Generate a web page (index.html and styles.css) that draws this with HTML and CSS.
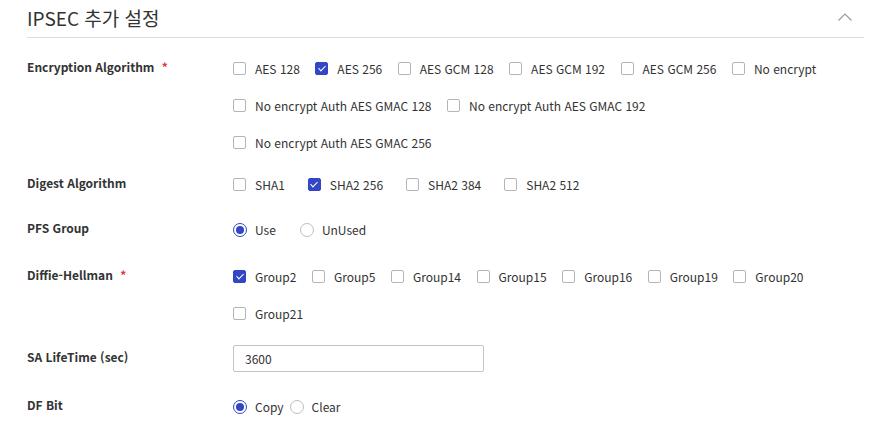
FILE: index.html
```html
<!DOCTYPE html>
<html lang="ko">
<head>
<meta charset="utf-8">
<link rel="stylesheet" href="styles.css">
</head>
<body>
<section class="panel">
  <header class="panel-head">
    <h2 class="panel-title">IPSEC 추가 설정</h2>
    <svg class="chevron" width="16" height="10" viewBox="0 0 16 10"><path d="M1.5 8.5 L8 2 L14.5 8.5" fill="none" stroke="#9a9a9a" stroke-width="1.2"/></svg>
  </header>
  <div class="form">
    <div class="field">
      <div class="label">Encryption Algorithm <span class="req">*</span></div>
      <div class="options">
        <label class="opt"><span class="cb"></span>AES 128</label>
        <label class="opt"><span class="cb on"></span>AES 256</label>
        <label class="opt"><span class="cb"></span>AES GCM 128</label>
        <label class="opt"><span class="cb"></span>AES GCM 192</label>
        <label class="opt"><span class="cb"></span>AES GCM 256</label>
        <label class="opt"><span class="cb"></span>No encrypt</label>
        <label class="opt"><span class="cb"></span>No encrypt Auth AES GMAC 128</label>
        <label class="opt"><span class="cb"></span>No encrypt Auth AES GMAC 192</label>
        <label class="opt"><span class="cb"></span>No encrypt Auth AES GMAC 256</label>
      </div>
    </div>
    <div class="field field-digest">
      <div class="label">Digest Algorithm</div>
      <div class="options spaced">
        <label class="opt"><span class="cb"></span>SHA1</label>
        <label class="opt"><span class="cb on"></span>SHA2 256</label>
        <label class="opt"><span class="cb"></span>SHA2 384</label>
        <label class="opt"><span class="cb"></span>SHA2 512</label>
      </div>
    </div>
    <div class="field field-pfs">
      <div class="label">PFS Group</div>
      <div class="options radios wide">
        <label class="opt"><span class="rd on"></span>Use</label>
        <label class="opt"><span class="rd"></span>UnUsed</label>
      </div>
    </div>
    <div class="field">
      <div class="label">Diffie-Hellman <span class="req">*</span></div>
      <div class="options">
        <label class="opt"><span class="cb on"></span>Group2</label>
        <label class="opt"><span class="cb"></span>Group5</label>
        <label class="opt"><span class="cb"></span>Group14</label>
        <label class="opt"><span class="cb"></span>Group15</label>
        <label class="opt"><span class="cb"></span>Group16</label>
        <label class="opt"><span class="cb"></span>Group19</label>
        <label class="opt"><span class="cb"></span>Group20</label>
        <label class="opt"><span class="cb"></span>Group21</label>
      </div>
    </div>
    <div class="field">
      <div class="label">SA LifeTime (sec)</div>
      <div class="options">
        <input class="text-input" type="text" value="3600">
      </div>
    </div>
    <div class="field field-last">
      <div class="label">DF Bit</div>
      <div class="options radios tight">
        <label class="opt"><span class="rd on"></span>Copy</label>
        <label class="opt"><span class="rd"></span>Clear</label>
      </div>
    </div>
  </div>
</section>
</body>
</html>
```
FILE: styles.css
```css
* { box-sizing: border-box; }
html, body { margin: 0; padding: 0; background: #fff; }
body {
  font-family: "Noto Sans CJK KR", "Noto Sans", sans-serif;
  color: #333;
  font-size: 12px;
}
.panel { padding: 0 13px 0 27px; }
.panel-head {
  display: flex;
  align-items: center;
  justify-content: space-between;
  height: 38px;
  border-bottom: 1px solid #dcdcdc;
  padding-bottom: 2px;
}
.panel-title {
  margin: 0;
  font-size: 19px;
  font-weight: 400;
  color: #333;
}
.chevron { margin-right: 11px; margin-top: -2px; }
.form {
  display: flex;
  flex-direction: column;
  gap: 8px;
  padding-top: 12px;
}
.field { display: flex; align-items: flex-start; }
.field-digest { margin-top: -3px; }
.field-pfs { margin-bottom: 2px; }
.field-last { margin-top: 3px; }
.label {
  width: 206px;
  flex: none;
  font-weight: 700;
  font-size: 12px;
  line-height: 33px;
  color: #333;
}
.req { color: #e53935; margin-left: 4px; }
.options {
  display: flex;
  flex-wrap: wrap;
  column-gap: 15.5px;
  flex: 1;
  max-width: 600px;
}
.options.spaced { column-gap: 23px; }
.opt {
  display: flex;
  align-items: center;
  height: 37px;
  font-size: 12px;
  color: #333;
  white-space: nowrap;
}
.cb {
  width: 13px;
  height: 13px;
  border: 1px solid #b5b5b5;
  border-radius: 2px;
  margin-right: 9px;
  position: relative;
  background: #fff;
}
.cb.on { background: #3346c4; border-color: #3346c4; }
.cb.on::after {
  content: "";
  position: absolute;
  left: 3.5px;
  top: 1px;
  width: 3px;
  height: 6px;
  border: solid #fff;
  border-width: 0 1.5px 1.5px 0;
  transform: rotate(45deg);
}
.rd {
  width: 14px;
  height: 14px;
  border: 1px solid #bdbdbd;
  border-radius: 50%;
  margin-right: 8px;
  position: relative;
  background: #fff;
}
.rd.on { border-color: #3346c4; }
.rd.on::after {
  content: "";
  position: absolute;
  left: 2px; top: 2px;
  width: 8px; height: 8px;
  border-radius: 50%;
  background: #3346c4;
}
.radios.wide { column-gap: 24px; }
.radios.tight { column-gap: 6px; }
.text-input {
  width: 251px;
  height: 27px;
  margin: 5px 0;
  border: 1px solid #c4c4c4;
  border-radius: 2px;
  padding: 0 11px;
  font-family: inherit;
  font-size: 12px;
  color: #333;
}
```
